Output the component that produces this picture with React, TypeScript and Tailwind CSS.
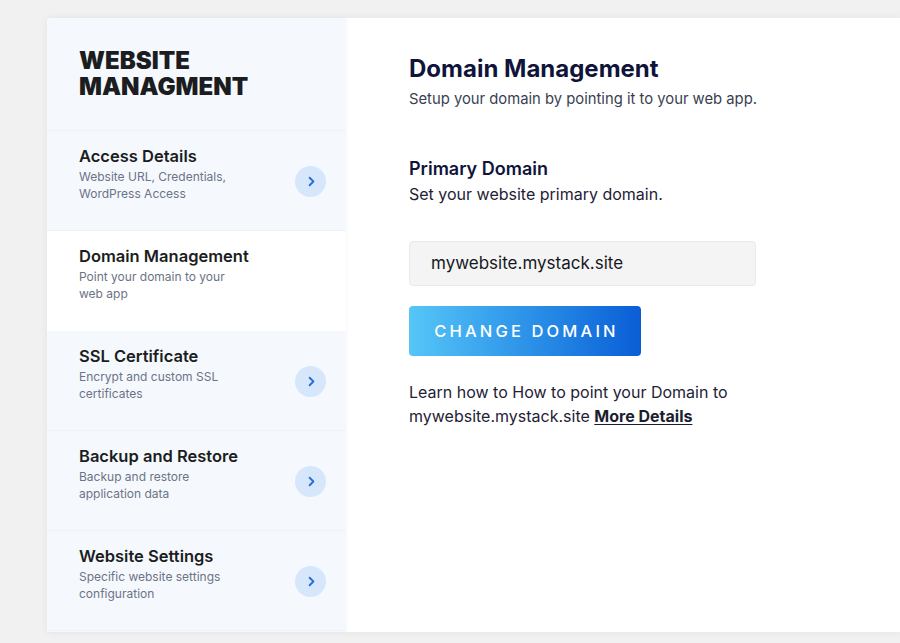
import { ChevronRight } from "lucide-react";

type NavItem = {
  title: string;
  desc: string;
  active?: boolean;
};

const items: NavItem[] = [
  { title: "Access Details", desc: "Website URL, Credentials, WordPress Access" },
  { title: "Domain Management", desc: "Point your domain to your web app", active: true },
  { title: "SSL Certificate", desc: "Encrypt and custom SSL certificates" },
  { title: "Backup and Restore", desc: "Backup and restore application data" },
  { title: "Website Settings", desc: "Specific website settings configuration" },
];

export default function App() {
  return (
    <div
      className="h-[643px] w-[900px] overflow-hidden bg-[#f1f1f1] pt-[18px] pl-[47px]"
      style={{ fontFamily: "Inter, 'Noto Sans', sans-serif" }}
    >
      <div className="flex h-[614px] rounded-tl-[4px] bg-white shadow-[0_0_8px_rgba(0,0,0,0.06)]">
        {/* Sidebar */}
        <div className="flex w-[299px] flex-col rounded-tl-[4px] bg-[#f5f9fe] shadow-[1px_0_3px_rgba(0,0,0,0.03)]">
          <div className="h-[113px] border-b border-[#eef3f9] px-8 pt-[30px]">
            <h1 className="text-[24px] leading-[26px] font-black text-[#1b1d21]">
              <span className="block">WEBSITE</span>
              <span className="block">MANAGMENT</span>
            </h1>
          </div>

          {items.map((item) => (
            <div
              key={item.title}
              className={`flex h-[100px] items-center justify-between border-b pr-5 pl-8 ${
                item.active ? "border-white bg-white" : "border-[#eef3f9] bg-[#f5f9fe]"
              }`}
            >
              <div className="self-start pt-[14px]">
                <div className="text-[16.5px] leading-[22px] font-semibold text-[#1b1d21]">
                  {item.title}
                </div>
                <div className="mt-0.5 max-w-[156px] text-[12px] leading-[16.5px] text-[#6c7385]">
                  {item.desc}
                </div>
              </div>
              {!item.active && (
                <div className="mt-0.5 flex h-[31px] w-[31px] items-center justify-center rounded-full bg-[#d6e6fb]">
                  <ChevronRight size={15} strokeWidth={3} className="ml-px text-[#2a6fd7]" />
                </div>
              )}
            </div>
          ))}
        </div>

        {/* Main content */}
        <div className="flex-1 pt-[35px] pl-[63px]">
          <div className="w-[347px]">
            <h2 className="text-[24px] leading-[32px] font-bold text-[#10143a]">
              Domain Management
            </h2>
            <p className="mt-[3px] text-[14.8px] leading-[22px] whitespace-nowrap text-[#3a3e52]">
              Setup your domain by pointing it to your web app.
            </p>

            <h3 className="mt-[46px] text-[18px] leading-[26px] font-semibold text-[#10143a]">
              Primary Domain
            </h3>
            <p className="text-[16px] leading-[24px] text-[#1f2236]">
              Set your website primary domain.
            </p>

            <div className="mt-[35px] flex h-[45px] items-center rounded-[4px] border border-[#e9e9e9] bg-[#f4f4f4] px-[21px] text-[17px] text-[#16181f]">
              mywebsite.mystack.site
            </div>

            <button className="mt-5 flex h-[50px] w-[232px] items-center justify-center rounded-[4px] bg-gradient-to-r from-[#56c6f8] to-[#0b5dd6] pl-[3px] text-[16.5px] font-medium tracking-[0.19em] text-white">
              CHANGE DOMAIN
            </button>

            <p className="mt-[24px] text-[16px] leading-[24px] text-[#1f2236]">
              Learn how to How to point your Domain to mywebsite.mystack.site{" "}
              <a href="#" className="font-bold text-[#1b1d30] underline underline-offset-2">
                More Details
              </a>
            </p>
          </div>
        </div>
      </div>
    </div>
  );
}
